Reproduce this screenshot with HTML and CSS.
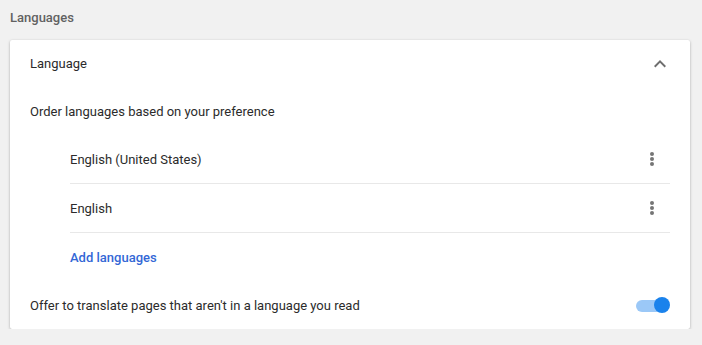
FILE: index.html
```html
<!DOCTYPE html>
<html>
<head>
<meta charset="utf-8">
<link rel="stylesheet" href="styles.css">
</head>
<body>
<div class="page">
  <h2 class="section-title">Languages</h2>
  <div class="card">
    <div class="row header-row">
      <span>Language</span>
      <svg class="chev" width="24" height="24" viewBox="0 0 24 24"><path d="M7.41 15.41L12 10.83l4.59 4.58L18 14l-6-6-6 6z" fill="#6e6e6e"/></svg>
    </div>
    <div class="row">
      <span>Order languages based on your preference</span>
    </div>
    <div class="list">
      <div class="lang-row">
        <span>English (United States)</span>
        <svg class="dots" width="24" height="24" viewBox="0 0 24 24"><circle cx="12" cy="7" r="2" fill="#757575"/><circle cx="12" cy="12" r="2" fill="#757575"/><circle cx="12" cy="17" r="2" fill="#757575"/></svg>
      </div>
      <div class="lang-row">
        <span>English</span>
        <svg class="dots" width="24" height="24" viewBox="0 0 24 24"><circle cx="12" cy="7" r="2" fill="#757575"/><circle cx="12" cy="12" r="2" fill="#757575"/><circle cx="12" cy="17" r="2" fill="#757575"/></svg>
      </div>
      <div class="lang-row add-row">
        <a class="add-link">Add languages</a>
      </div>
    </div>
    <div class="row">
      <span>Offer to translate pages that aren't in a language you read</span>
      <div class="toggle"><div class="track"></div><div class="thumb"></div></div>
    </div>
  </div>
</div>
</body>
</html>
```
FILE: styles.css
```css
html, body {
  margin: 0;
  padding: 0;
  background: #f1f1f1;
}
body {
  font-family: Roboto, "Liberation Sans", sans-serif;
  font-size: 13px;
  color: #2b2b2b;
}
.page {
  padding: 8px 12px 0 10px;
}
.section-title {
  margin: 0;
  font-size: 13px;
  font-weight: 500;
  color: #616161;
  height: 22px;
  line-height: 20px;
  margin-bottom: 10px;
}
.card {
  background: #fff;
  border-radius: 2px;
  box-shadow: 0 1px 3px rgba(0,0,0,0.28), 0 0 1px rgba(0,0,0,0.08);
  padding: 0 20px;
}
.row {
  height: 48px;
  display: flex;
  align-items: center;
  justify-content: space-between;
}
.header-row {
  height: 47px;
}
.chev {
  margin-right: -2px;
}
.list {
  padding-left: 40px;
}
.lang-row {
  height: 48px;
  display: flex;
  align-items: center;
  justify-content: space-between;
  border-bottom: 1px solid #e8e8e8;
}
.add-row {
  border-bottom: none;
}
.dots {
  margin-right: 6px;
}
.add-link {
  color: #3367d6;
  font-weight: 500;
}
.toggle {
  position: relative;
  width: 34px;
  height: 16px;
}
.track {
  position: absolute;
  left: 0;
  top: 3px;
  width: 28px;
  height: 12px;
  border-radius: 6px;
  background: #9bc8f7;
}
.thumb {
  position: absolute;
  right: 0;
  top: 0;
  width: 16px;
  height: 16px;
  border-radius: 50%;
  background: #1a82ec;
}
```
